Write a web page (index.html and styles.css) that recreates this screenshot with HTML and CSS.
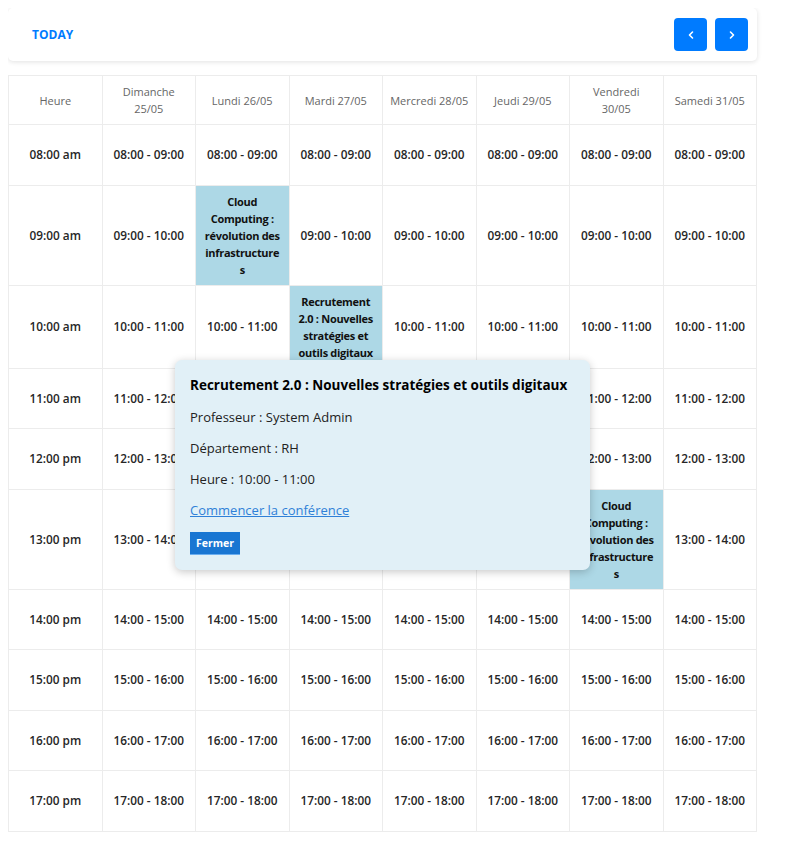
FILE: index.html
```html
<!DOCTYPE html>
<html lang="fr">
<head>
<meta charset="utf-8">
<title>Emploi du temps</title>
<link rel="stylesheet" href="styles.css">
</head>
<body>
<div class="page">
  <div class="toolbar">
    <button class="today">Today</button>
    <div class="nav">
      <button class="nav-btn" aria-label="Précédent"><svg width="8" height="10" viewBox="0 0 8 10"><polyline points="5.5,2 2.5,5 5.5,8" fill="none" stroke="#fff" stroke-width="1.6" stroke-linecap="round" stroke-linejoin="round"/></svg></button>
      <button class="nav-btn" aria-label="Suivant"><svg width="8" height="10" viewBox="0 0 8 10"><polyline points="2.5,2 5.5,5 2.5,8" fill="none" stroke="#fff" stroke-width="1.6" stroke-linecap="round" stroke-linejoin="round"/></svg></button>
    </div>
  </div>

  <table class="schedule">
    <thead>
      <tr>
        <th>Heure</th><th>Dimanche<br>25/05</th><th>Lundi 26/05</th><th>Mardi 27/05</th><th>Mercredi 28/05</th><th>Jeudi 29/05</th><th>Vendredi<br>30/05</th><th>Samedi 31/05</th>
      </tr>
    </thead>
    <tbody>
      <tr><td>08:00 am</td><td>08:00 - 09:00</td><td>08:00 - 09:00</td><td>08:00 - 09:00</td><td>08:00 - 09:00</td><td>08:00 - 09:00</td><td>08:00 - 09:00</td><td>08:00 - 09:00</td></tr>
      <tr><td>09:00 am</td><td>09:00 - 10:00</td><td class="event">Cloud<br>Computing :<br>révolution des<br>infrastructure<br>s</td><td>09:00 - 10:00</td><td>09:00 - 10:00</td><td>09:00 - 10:00</td><td>09:00 - 10:00</td><td>09:00 - 10:00</td></tr>
      <tr><td>10:00 am</td><td>10:00 - 11:00</td><td>10:00 - 11:00</td><td class="event">Recrutement<br>2.0 : Nouvelles<br>stratégies et<br>outils digitaux</td><td>10:00 - 11:00</td><td>10:00 - 11:00</td><td>10:00 - 11:00</td><td>10:00 - 11:00</td></tr>
      <tr><td>11:00 am</td><td>11:00 - 12:00</td><td>11:00 - 12:00</td><td>11:00 - 12:00</td><td>11:00 - 12:00</td><td>11:00 - 12:00</td><td>11:00 - 12:00</td><td>11:00 - 12:00</td></tr>
      <tr><td>12:00 pm</td><td>12:00 - 13:00</td><td>12:00 - 13:00</td><td>12:00 - 13:00</td><td>12:00 - 13:00</td><td>12:00 - 13:00</td><td>12:00 - 13:00</td><td>12:00 - 13:00</td></tr>
      <tr><td>13:00 pm</td><td>13:00 - 14:00</td><td>13:00 - 14:00</td><td>13:00 - 14:00</td><td>13:00 - 14:00</td><td>13:00 - 14:00</td><td class="event">Cloud<br>Computing :<br>révolution des<br>infrastructure<br>s</td><td>13:00 - 14:00</td></tr>
      <tr><td>14:00 pm</td><td>14:00 - 15:00</td><td>14:00 - 15:00</td><td>14:00 - 15:00</td><td>14:00 - 15:00</td><td>14:00 - 15:00</td><td>14:00 - 15:00</td><td>14:00 - 15:00</td></tr>
      <tr><td>15:00 pm</td><td>15:00 - 16:00</td><td>15:00 - 16:00</td><td>15:00 - 16:00</td><td>15:00 - 16:00</td><td>15:00 - 16:00</td><td>15:00 - 16:00</td><td>15:00 - 16:00</td></tr>
      <tr><td>16:00 pm</td><td>16:00 - 17:00</td><td>16:00 - 17:00</td><td>16:00 - 17:00</td><td>16:00 - 17:00</td><td>16:00 - 17:00</td><td>16:00 - 17:00</td><td>16:00 - 17:00</td></tr>
      <tr><td>17:00 pm</td><td>17:00 - 18:00</td><td>17:00 - 18:00</td><td>17:00 - 18:00</td><td>17:00 - 18:00</td><td>17:00 - 18:00</td><td>17:00 - 18:00</td><td>17:00 - 18:00</td></tr>
    </tbody>
  </table>

  <div class="popup">
    <h3 class="popup-title">Recrutement 2.0 : Nouvelles stratégies et outils digitaux</h3>
    <p>Professeur : System Admin</p>
    <p>Département : RH</p>
    <p>Heure : 10:00 - 11:00</p>
    <p><a href="#" class="popup-link">Commencer la conférence</a></p>
    <button class="close-btn">Fermer</button>
  </div>
</div>
</body>
</html>
```

FILE: styles.css
```css
* { box-sizing: border-box; }

body {
  margin: 8px;
  background: #fff;
  font-family: "Open Sans", "Noto Sans", sans-serif;
  color: #262626;
}

.page {
  position: relative;
  width: 749px;
}

.toolbar {
  display: flex;
  align-items: center;
  justify-content: space-between;
  height: 53px;
  padding: 0 9px 0 10px;
  background: #fff;
  border-radius: 5px;
  box-shadow: 0 1px 5px rgba(0, 0, 0, 0.12);
}

.today {
  border: 0;
  background: transparent;
  padding: 0 14px;
  font-family: inherit;
  font-size: 12px;
  font-weight: 700;
  color: #007bff;
  text-transform: uppercase;
}

.nav {
  display: flex;
  gap: 8px;
}

.nav-btn {
  width: 33px;
  height: 33px;
  border: 0;
  border-radius: 4px;
  background: #007bff;
  display: flex;
  align-items: center;
  justify-content: center;
  padding: 0;
}

.schedule {
  width: 749px;
  margin-top: 14px;
  border-collapse: collapse;
  table-layout: fixed;
}

.schedule th,
.schedule td {
  border: 1px solid #ececec;
  text-align: center;
  vertical-align: middle;
  padding: 7px 4px;
  line-height: 17px;
}

.schedule th {
  height: 49px;
  font-size: 11px;
  font-weight: 400;
  color: #666;
}

.schedule td {
  height: 60.5px;
  font-size: 11.8px;
  font-weight: 600;
  color: #262626;
  white-space: nowrap;
}

.schedule td.event {
  padding: 7px 2px;
  line-height: 17px;
  background: #add8e6;
  color: #111;
  font-size: 11px;
  font-weight: 700;
  letter-spacing: -0.3px;
}

.popup {
  position: absolute;
  left: 167px;
  top: 352px;
  width: 415px;
  height: 210px;
  padding: 15px;
  background: #e1f0f7;
  border-radius: 7px;
  box-shadow: 0 2px 8px rgba(0, 0, 0, 0.22);
  color: #222;
}

.popup-title {
  margin: 0 0 12px;
  font-size: 13.5px;
  line-height: 20px;
  font-weight: 700;
  color: #000;
  white-space: nowrap;
}

.popup p {
  margin: 0 0 11px;
  font-size: 13px;
  line-height: 20px;
}

.popup p:nth-of-type(4) {
  margin-bottom: 12px;
}

.popup-link {
  color: #2f80d8;
  text-decoration: underline;
}

.close-btn {
  display: block;
  margin-top: 1px;
  height: 23px;
  width: 50px;
  padding: 0;
  border: 0;
  border-bottom: 1px solid #6aaef0;
  background: #1976d2;
  color: #fff;
  font-family: inherit;
  font-size: 10.5px;
  font-weight: 700;
}
```
